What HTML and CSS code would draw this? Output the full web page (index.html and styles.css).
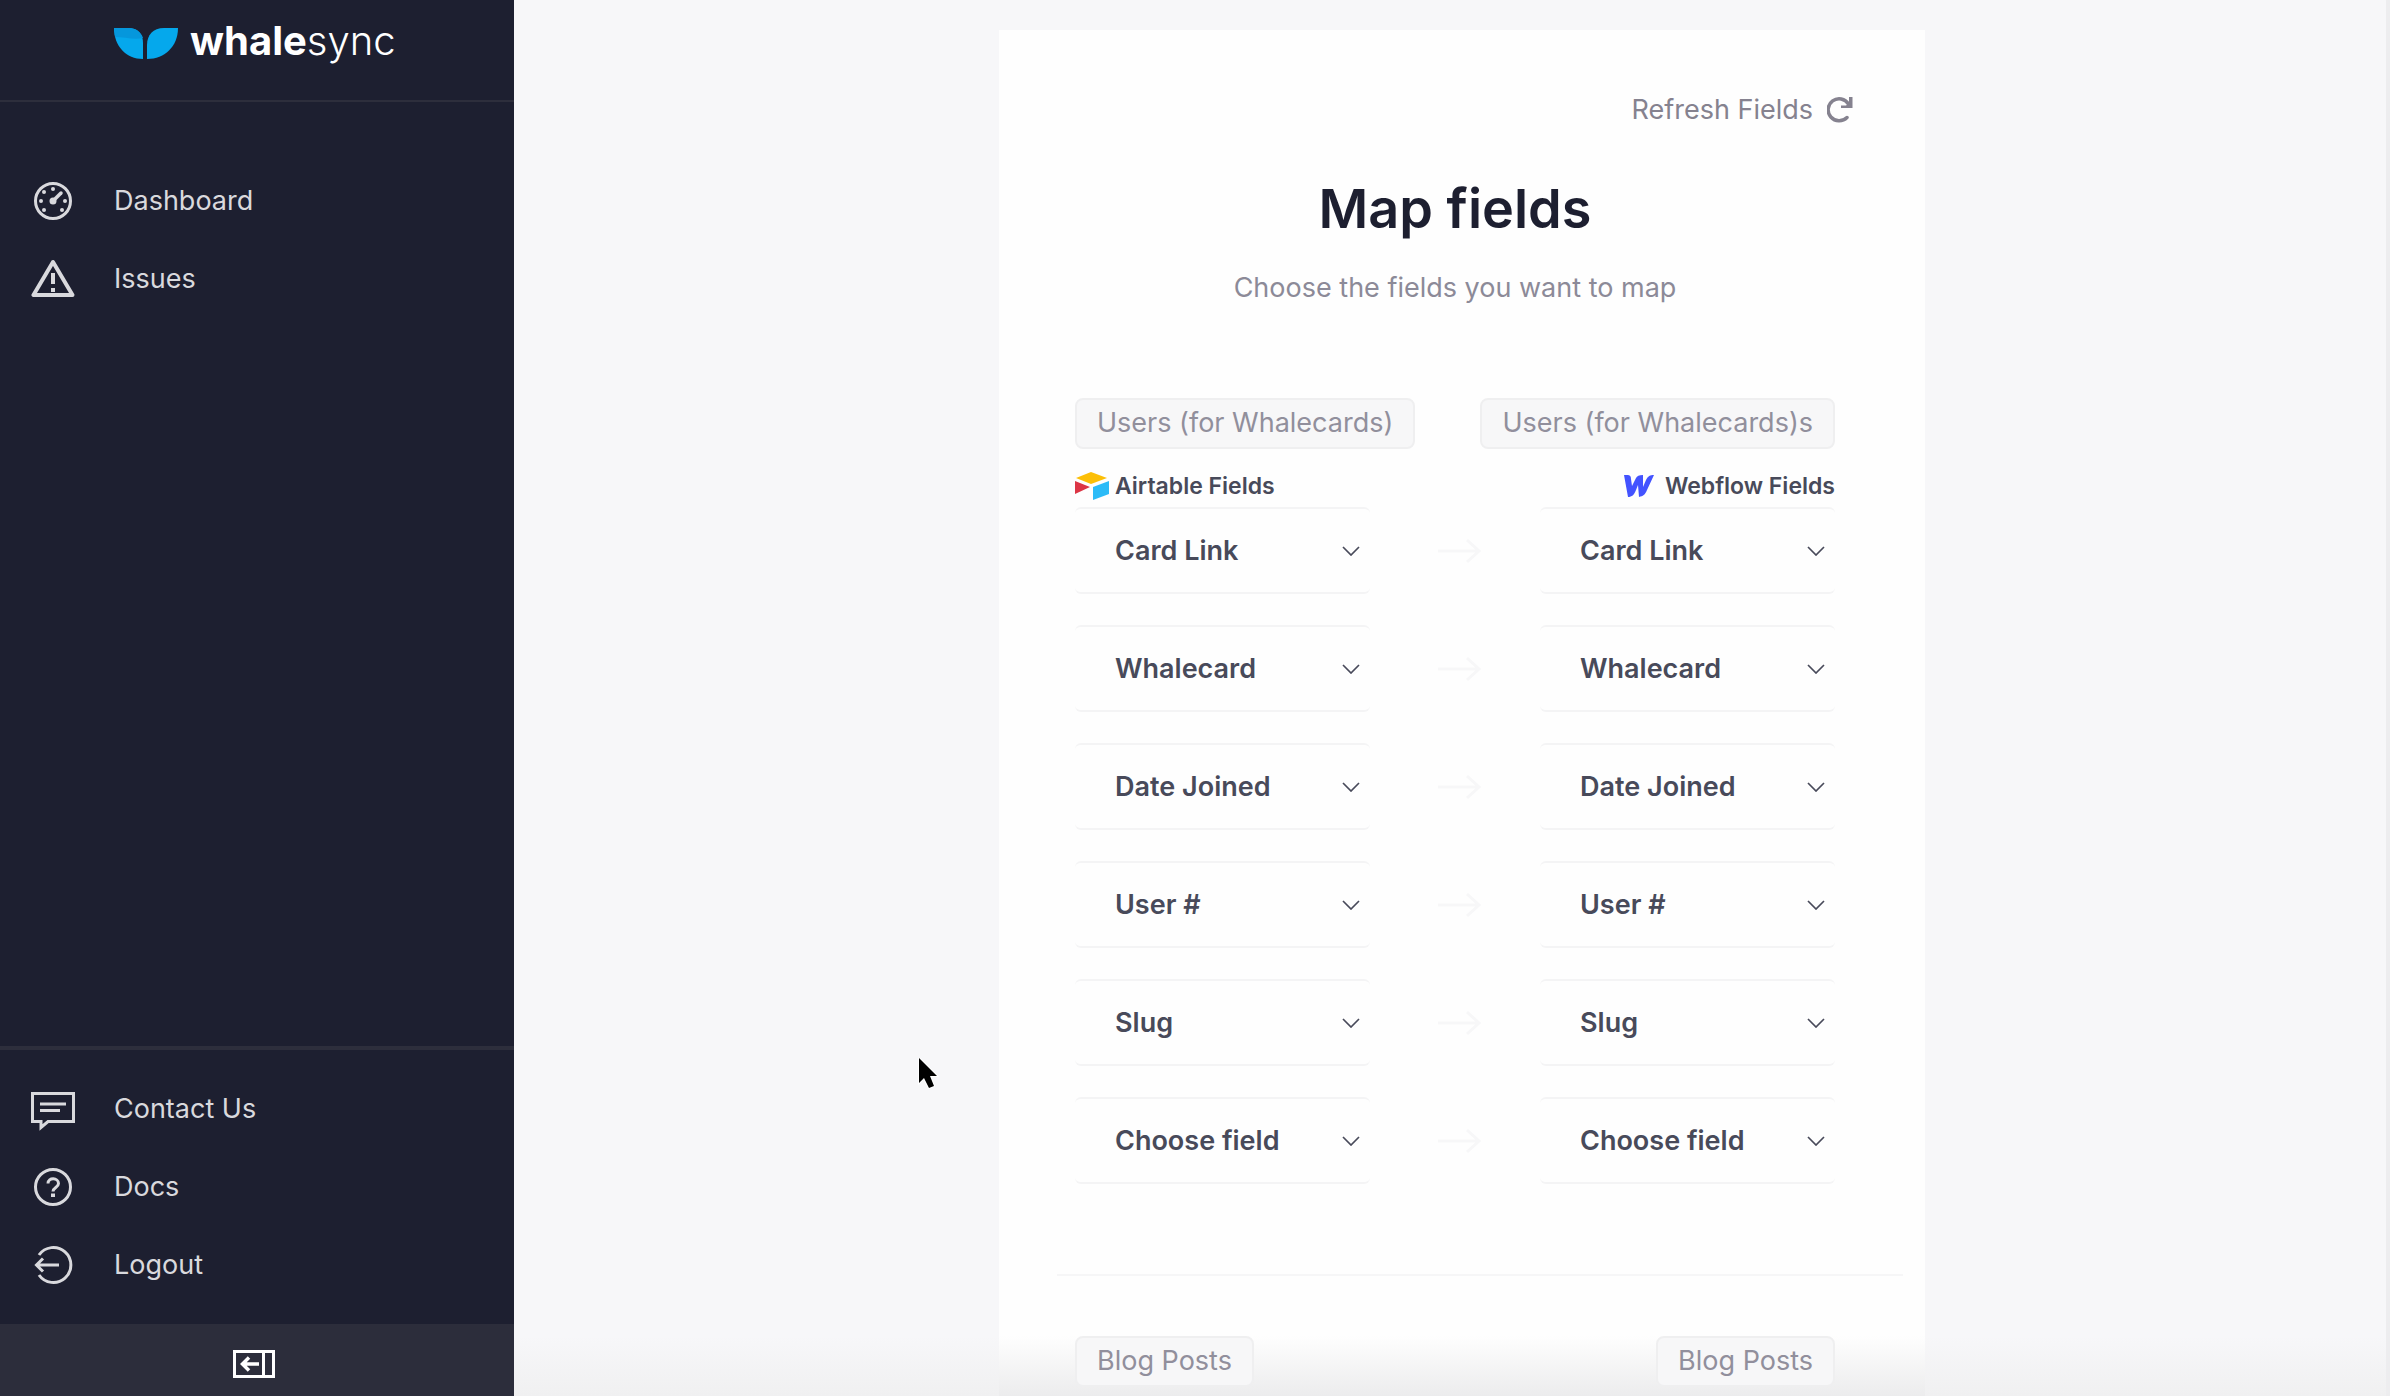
FILE: index.html
```html
<!DOCTYPE html>
<html lang="en">
<head>
<meta charset="utf-8">
<title>Whalesync – Map fields</title>
<link rel="stylesheet" href="styles.css">
</head>
<body>
<svg class="sprite" aria-hidden="true">
  <symbol id="arrow" viewBox="0 0 44 26"><path d="M1 13h41M30 2l12 11-12 11" fill="none" stroke="currentColor" stroke-width="3"/></symbol>
  <symbol id="chevron" viewBox="0 0 18 10"><path d="M1 1l8 8 8-8" fill="none" stroke="currentColor" stroke-width="1.700"/></symbol>
</svg>
<div class="app">
  <aside class="sidebar">
    <a class="brand" href="#">
      <svg width="64" height="32" viewBox="0 0 64 32" aria-hidden="true">
        <path d="M0 0h14c10 0 15 6 15 15v16C12 31 0 18 0 0z" fill="#05a8ec"/>
        <path d="M0 0h14c8 0 13 4 15 10C20 12 10 9 1 9z" fill="#0597dc"/>
        <path d="M64 0H50C39 0 33 7 33 17v14c18 0 31-13 31-31z" fill="#05a8ec"/>
      </svg>
      <span class="wordmark"><b>whale</b>sync</span>
    </a>
    <nav class="nav nav-main">
      <a href="#"><svg class="icon" viewBox="0 0 44 44"><circle cx="22" cy="22" r="17.500"/><path d="M22 22l8-8" stroke-width="3.500" stroke-linecap="round"/><g class="solid"><circle cx="22" cy="22" r="3.500"/><circle cx="22" cy="10" r="2"/><circle cx="13" cy="13" r="2"/><circle cx="10" cy="22" r="2"/><circle cx="34" cy="22" r="2"/><circle cx="13" cy="31" r="2"/><circle cx="31" cy="31" r="2"/></g></svg>Dashboard</a>
      <a href="#"><svg class="icon" viewBox="0 0 44 44"><path d="M22 5L2.500 38h39z" stroke-width="4" stroke-linejoin="round"/><path d="M22 16v11M22 31v4" stroke-width="4"/></svg>Issues</a>
    </nav>
    <nav class="nav nav-help">
      <a href="#"><svg class="icon" viewBox="0 0 44 44"><path d="M1.500 6.500h41v28H17l-7 6v-6H1.500z"/><path d="M9 17h26M9 23.500h20"/></svg>Contact Us</a>
      <a href="#"><svg class="icon" viewBox="0 0 44 44"><circle cx="22" cy="22" r="17.500"/><path d="M17 18.500c0-6.500 10.500-6 10.500 0 0 4-5.500 4-5.500 8"/><path d="M22 28.500v3.500" stroke-width="4"/></svg>Docs</a>
      <a href="#"><svg class="icon" viewBox="0 0 44 44"><path d="M8 12a17.500 17.500 0 1 1 0 20"/><path d="M28 22H6M12 15.500L5.500 22l6.500 6.500"/></svg>Logout</a>
    </nav>
    <button class="collapse" type="button" aria-label="Collapse sidebar">
      <svg width="42" height="28" viewBox="0 0 42 28"><g fill="none" stroke="#fff" stroke-width="3"><path d="M1.500 1.500h39v25h-39zM30.500 1v26"/><path d="M26 14H10M16 7.500L9.500 14l6.500 6.500" stroke-width="3.500"/></g></svg>
    </button>
  </aside>

  <main class="main">
    <section class="card">
      <button class="refresh" type="button">Refresh Fields
        <svg width="26" height="26" viewBox="0 0 26 26"><path d="M20 20.500A11 11 0 1 1 21.500 7" fill="none" stroke="currentColor" stroke-width="3.500" stroke-linecap="round"/><path d="M25.500 0v11H14v-2.500h5L22 6V0z" fill="currentColor"/></svg>
      </button>
      <h1>Map fields</h1>
      <p class="subtitle">Choose the fields you want to map</p>

      <div class="tables"><span class="tag">Users (for Whalecards)</span><span class="tag">Users (for Whalecards)s</span></div>
      <div class="sources">
        <span class="source airtable"><svg width="34" height="28" viewBox="0 0 34 28"><path d="M16 0L1 6l15 6 16-6z" fill="#fcbf07"/><path d="M0 9l15 6L0 22z" fill="#dc3545"/><path d="M18 15l16-6v13l-16 6z" fill="#2cbbf7"/></svg>Airtable Fields</span>
        <span class="source webflow"><svg width="30" height="22" viewBox="0 0 30 22"><path d="M0 0h3c3 0 4 1 4 4l1 7 4-8c1-2 3-3 7-3v12l3-7c2-4 4-5 8-5l-7 15c-2 5-4 6-8 7l-1-12-2 5c-2 5-4 7-8 7z" fill="#4353ff"/></svg>Webflow Fields</span>
      </div>

      <div class="rows">
        <div class="row"><span class="field"><select aria-label="Airtable field 1"><option>Card Link</option></select><svg><use href="#chevron"/></svg></span><svg class="arrow"><use href="#arrow"/></svg><span class="field"><select aria-label="Webflow field 1"><option>Card Link</option></select><svg><use href="#chevron"/></svg></span></div>
        <div class="row"><span class="field"><select aria-label="Airtable field 2"><option>Whalecard</option></select><svg><use href="#chevron"/></svg></span><svg class="arrow"><use href="#arrow"/></svg><span class="field"><select aria-label="Webflow field 2"><option>Whalecard</option></select><svg><use href="#chevron"/></svg></span></div>
        <div class="row"><span class="field"><select aria-label="Airtable field 3"><option>Date Joined</option></select><svg><use href="#chevron"/></svg></span><svg class="arrow"><use href="#arrow"/></svg><span class="field"><select aria-label="Webflow field 3"><option>Date Joined</option></select><svg><use href="#chevron"/></svg></span></div>
        <div class="row"><span class="field"><select aria-label="Airtable field 4"><option>User #</option></select><svg><use href="#chevron"/></svg></span><svg class="arrow"><use href="#arrow"/></svg><span class="field"><select aria-label="Webflow field 4"><option>User #</option></select><svg><use href="#chevron"/></svg></span></div>
        <div class="row"><span class="field"><select aria-label="Airtable field 5"><option>Slug</option></select><svg><use href="#chevron"/></svg></span><svg class="arrow"><use href="#arrow"/></svg><span class="field"><select aria-label="Webflow field 5"><option>Slug</option></select><svg><use href="#chevron"/></svg></span></div>
        <div class="row"><span class="field"><select aria-label="Airtable field 6"><option>Choose field</option></select><svg><use href="#chevron"/></svg></span><svg class="arrow"><use href="#arrow"/></svg><span class="field"><select aria-label="Webflow field 6"><option>Choose field</option></select><svg><use href="#chevron"/></svg></span></div>
      </div>

      <hr>
      <div class="tables"><span class="tag">Blog Posts</span><span class="tag">Blog Posts</span></div>
    </section>
  </main>
</div>
<svg class="cursor" width="22" height="34" viewBox="0 0 22 34" aria-hidden="true"><path d="M1 0v25l5-5 5 10 5-2-4-10h7z" fill="#000" stroke="#fff" stroke-width="2" paint-order="stroke"/></svg>
</body>
</html>
```

FILE: styles.css
```css
* { box-sizing: border-box; }

body {
  margin: 0;
  font-family: Inter, "Liberation Sans", sans-serif;
  font-size: 27px;
  line-height: 34px;
  color: #484a5a;
}

button, select { font: inherit; color: inherit; border: 0; background: none; padding: 0; }

.sprite { display: none; }

.app { display: flex; height: 100vh; overflow: hidden; }

/* Sidebar */
.sidebar {
  flex: 0 0 514px;
  display: flex;
  flex-direction: column;
  background: #1d1f30;
  color: #d9d9dd;
}

.brand {
  display: flex;
  gap: 12px;
  height: 102px;
  padding: 28px 0 0 114px;
  border-bottom: 2px solid #2d2e3c;
  color: #fff;
  text-decoration: none;
}

.wordmark { font-size: 40px; line-height: 26px; font-weight: 300; }
.wordmark b { font-weight: 700; }

.nav { display: flex; flex-direction: column; }
.nav-main { padding-top: 60px; }
.nav-help { margin-top: auto; padding: 20px 0; border-top: 4px solid #2d2e3c; }

.nav a {
  display: flex;
  align-items: center;
  gap: 39px;
  height: 78px;
  padding-left: 31px;
  color: inherit;
  text-decoration: none;
}

.icon { width: 44px; height: 44px; fill: none; stroke: currentColor; stroke-width: 3; }
.icon .solid { fill: currentColor; stroke: none; }

.collapse {
  flex: none;
  display: flex;
  justify-content: center;
  height: 72px;
  padding: 26px 6px 0 0;
  background: #2c2d3b;
}

/* Main area */
.main {
  flex: 1;
  padding: 30px 0 0 24px;
  overflow: hidden;
  background: linear-gradient(transparent calc(100% - 60px), #f0f0f1) #f7f7f9;
  border-right: 4px solid #ededef;
}

.card {
  max-width: 926px;
  min-height: 100%;
  margin: 0 auto;
  padding: 63px 90px 9px 76px;
  background: linear-gradient(transparent calc(100% - 60px), #ececed) #fefefe;
}

.refresh {
  display: flex;
  align-items: center;
  gap: 14px;
  margin: 0 -18px 0 auto;
  color: #85828f;
}

h1 {
  margin: 48px 0 28px;
  font-size: 54px;
  line-height: 68px;
  font-weight: 600;
  text-align: center;
  color: #1d1f30;
}

.subtitle { margin: 0 0 93px; text-align: center; color: #8c8a98; }

.tables { display: flex; justify-content: space-between; }

.tag {
  padding: 6px 20px 7px;
  border: 2px solid #efeff0;
  border-radius: 8px;
  background: #f7f7f8;
  line-height: 34px;
  color: #918f9c;
}

.sources {
  display: flex;
  justify-content: space-between;
  padding: 20px 0 4px;
  font-size: 23px;
  font-weight: 600;
}

.source { display: flex; align-items: center; gap: 6px; }
.webflow { gap: 11px; }

.rows { display: grid; gap: 31px; }

.row {
  display: grid;
  grid-template-columns: 295px 1fr 295px;
  align-items: center;
  justify-items: center;
}

.field { display: grid; align-items: center; width: 100%; }
.field > * { grid-area: 1 / 1; }

.field select {
  width: 100%;
  height: 87px;
  padding-left: 40px;
  appearance: none;
  border: solid #f4f4f5;
  border-width: 2px 0;
  border-radius: 6px;
  font-weight: 600;
}

.field svg { width: 18px; height: 10px; justify-self: end; margin-right: 10px; pointer-events: none; }

.arrow { width: 44px; height: 26px; margin-left: 8px; color: #f7f7f8; }

hr { margin: 90px -68px 60px -18px; border: 0; border-top: 2px solid #f6f6f7; }

.cursor { position: fixed; left: 918px; top: 1058px; }
```
